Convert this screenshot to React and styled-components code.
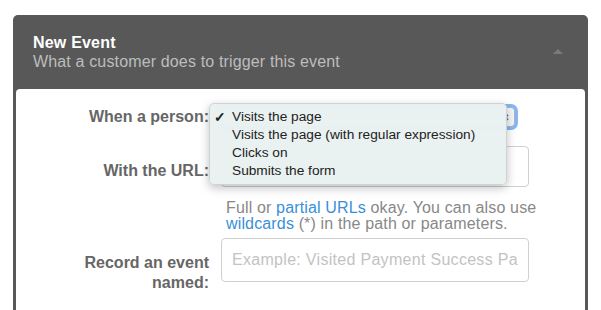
import styled, { createGlobalStyle } from "styled-components";

const GlobalStyle = createGlobalStyle`
  body {
    margin: 0;
    background: #fff;
    font-family: "Liberation Sans", Arial, sans-serif;
  }
`;

const Page = styled.div`
  width: 601px;
  height: 310px;
  overflow: hidden;
  padding: 15px 13px 0 13px;
  box-sizing: border-box;
`;

const Panel = styled.div`
  background: #585858;
  border-radius: 5px 5px 0 0;
  padding: 0 3px;
  height: 320px;
`;

const Header = styled.div`
  height: 74px;
  display: flex;
  align-items: center;
  justify-content: space-between;
  padding: 0 22px 0 17px;
`;

const Title = styled.div`
  color: #fff;
  font-size: 16px;
  font-weight: bold;
  line-height: 19px;
  letter-spacing: 0.2px;
`;

const Subtitle = styled.div`
  color: #bdbdbd;
  font-size: 16px;
  line-height: 19px;
  letter-spacing: 0.15px;
`;

const Caret = styled.span`
  width: 0;
  height: 0;
  border-left: 5px solid transparent;
  border-right: 5px solid transparent;
  border-bottom: 5px solid #7a7a7a;
  margin-top: -2px;
`;

const Body = styled.div`
  background: #fff;
  border-radius: 4px 4px 0 0;
  height: 260px;
  padding-top: 16px;
  box-sizing: border-box;
`;

const Row = styled.div`
  display: grid;
  grid-template-columns: 193px 308px;
  column-gap: 12px;
  margin-bottom: ${(p) => p.gap || 0}px;
  position: relative;
`;

const Label = styled.label`
  text-align: right;
  color: #666;
  font-size: 16px;
  font-weight: bold;
  line-height: 20px;
  padding-top: ${(p) => p.top || 0}px;
`;

const Select = styled.div`
  width: 294px;
  height: 20px;
  border: 1px solid #a9b6c8;
  border-radius: 4px;
  background: #f6f6f6;
  box-shadow: 0 0 0 3px rgba(80, 152, 240, 0.7);
  display: flex;
  justify-content: flex-end;
  align-items: center;
  padding-right: 4px;
  box-sizing: border-box;
  font-size: 10px;
  color: #555;
  margin-top: 2px;
`;

const Menu = styled.ul`
  position: absolute;
  left: 193px;
  top: -2px;
  width: 298px;
  margin: 0;
  padding: 4px 0;
  list-style: none;
  background: rgba(234, 241, 241, 0.98);
  border: 1px solid rgba(0, 0, 0, 0.12);
  border-radius: 5px;
  box-shadow: 0 3px 10px rgba(0, 0, 0, 0.25);
  box-sizing: border-box;
  z-index: 2;
`;

const Item = styled.li`
  position: relative;
  font-size: 13.7px;
  line-height: 18px;
  color: #222;
  padding-left: 22px;
`;

const Check = styled.span`
  position: absolute;
  left: 4px;
  top: 0;
  font-size: 14px;
  font-weight: bold;
`;

const Input = styled.div`
  height: ${(p) => p.h}px;
  border: 1px solid #d0d0d0;
  border-radius: 4px;
  box-sizing: border-box;
  display: flex;
  align-items: center;
  padding: 0 10px;
  font-size: 16px;
  letter-spacing: 0.3px;
  color: #c3c3c3;
  white-space: nowrap;
  overflow: hidden;
`;

const Placeholder = styled.span`
  display: block;
  overflow: hidden;
  width: 100%;
`;

const Help = styled.p`
  margin: 13px 0 6px 0;
  font-size: 16px;
  line-height: 16px;
  letter-spacing: 0.15px;
  color: #888;
  padding-left: 5px;
  white-space: nowrap;
`;

const Link = styled.a`
  color: #3a8fd9;
  text-decoration: none;
`;

export default function App() {
  return (
    <>
      <GlobalStyle />
      <Page>
        <Panel>
          <Header>
            <div>
              <Title>New Event</Title>
              <Subtitle>What a customer does to trigger this event</Subtitle>
            </div>
            <Caret />
          </Header>
          <Body>
            <Row gap={19}>
              <Label top={2}>When a person:</Label>
              <Select>⇕</Select>
              <Menu>
                <Item>
                  <Check>✓</Check>Visits the page
                </Item>
                <Item>Visits the page (with regular expression)</Item>
                <Item>Clicks on</Item>
                <Item>Submits the form</Item>
              </Menu>
            </Row>
            <Row>
              <Label top={15}>With the URL:</Label>
              <Input h={41} />
            </Row>
            <Row>
              <div />
              <Help>
                Full or <Link href="#">partial URLs</Link> okay. You can also use
                <br />
                <Link href="#">wildcards</Link> (*) in the path or parameters.
              </Help>
            </Row>
            <Row>
              <Label top={15}>
                Record an event
                <br />
                named:
              </Label>
              <Input h={44}>
                <Placeholder>Example: Visited Payment Success Page</Placeholder>
              </Input>
            </Row>
          </Body>
        </Panel>
      </Page>
    </>
  );
}
